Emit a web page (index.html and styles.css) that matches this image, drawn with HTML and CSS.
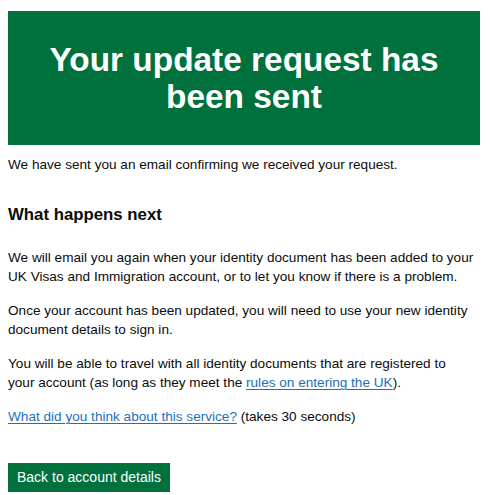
FILE: index.html
```html
<!DOCTYPE html>
<html lang="en">
<head>
<meta charset="utf-8">
<title>Your update request has been sent</title>
<link rel="stylesheet" href="styles.css">
</head>
<body>
<main class="main">
  <div class="panel">
    <h1 class="panel-title">Your update request has been sent</h1>
  </div>
  <p class="body body-first">We have sent you an email confirming we received your request.</p>
  <h2 class="heading">What happens next</h2>
  <p class="body">We will email you again when your identity document has been added to your UK Visas and Immigration account, or to let you know if there is a problem.</p>
  <p class="body">Once your account has been updated, you will need to use your new identity document details to sign in.</p>
  <p class="body">You will be able to travel with all identity documents that are registered to your account (as long as they meet the <a class="link" href="#">rules on entering the UK</a>).</p>
  <p class="body"><a class="link" href="#">What did you think about this service?</a> (takes 30 seconds)</p>
  <a class="button" href="#">Back to account details</a>
</main>
</body>
</html>
```
FILE: styles.css
```css
html, body {
  margin: 0;
  padding: 0;
  background: #ffffff;
}
body {
  padding: 11px 10px 0 8px;
  font-family: "Liberation Sans", Arial, sans-serif;
  color: #0b0c0c;
}
.main {
  display: flex;
  flex-direction: column;
  align-items: flex-start;
}
.panel {
  align-self: stretch;
  background: #00703c;
  color: #ffffff;
  padding: 30px 20px;
  text-align: center;
}
.panel-title {
  margin: 0;
  font-size: 33.4px;
  line-height: 37px;
  font-weight: 700;
}
.body {
  margin: 0 0 15px 0;
  max-width: 466px;
  font-size: 13.6px;
  line-height: 19px;
}
.body-first {
  margin-top: 10px;
  margin-bottom: 29px;
}
.heading {
  margin: 0 0 21px 0;
  font-size: 16.8px;
  line-height: 24px;
  font-weight: 700;
}
.link {
  color: #1d70b8;
  text-decoration: underline;
  text-decoration-thickness: 1px;
  text-underline-offset: 2px;
}
.button {
  margin-top: 22px;
  display: inline-block;
  background: #00703c;
  color: #ffffff;
  text-decoration: none;
  font-size: 14px;
  line-height: 19px;
  padding: 5px 9px 5px 9px;
  box-shadow: 0 2px 0 #002d18;
}
```
